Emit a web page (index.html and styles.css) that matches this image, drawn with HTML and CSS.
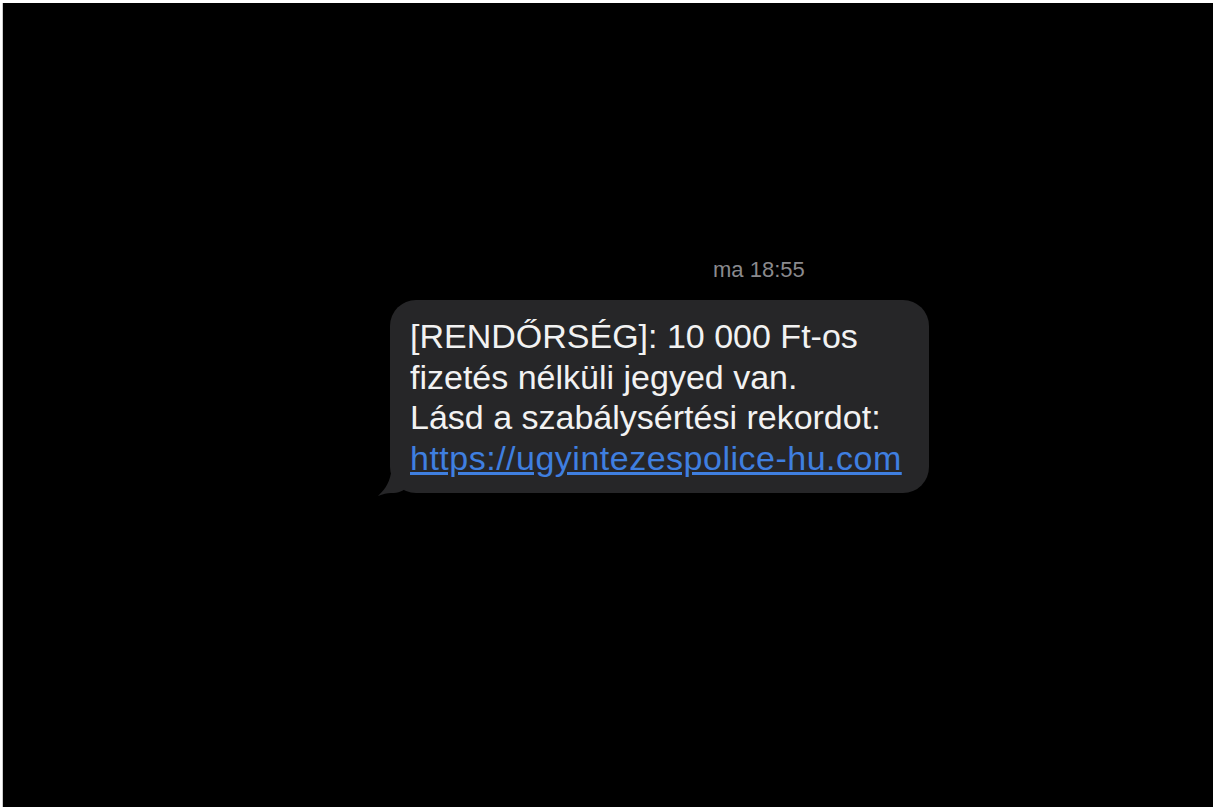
FILE: index.html
```html
<!DOCTYPE html>
<html lang="hu">
<head>
    <meta charset="UTF-8">
    <meta name="viewport" content="width=device-width,initial-scale=1">
    <title>Üzenet</title>
    <link rel="stylesheet" href="styles.css">
</head>
<body>
    <div class="screen">
        <div class="thread">
            <div class="time">ma 18:55</div>
            <div class="bubble">
                <p>[RENDŐRSÉG]: 10 000 Ft-os<br>fizetés nélküli jegyed van.<br>Lásd a szabálysértési rekordot:<br><a href="#">https://ugyintezespolice-hu.com</a></p>
                <svg class="tail" width="30" height="24" viewBox="0 0 30 24">
                    <path d="M14 0 L30 0 L30 14 C26 18 22 20 14 20 C10 20 6 21 1 23 C6 18 12 12 14 0 Z" fill="#262628"/>
                </svg>
            </div>
        </div>
    </div>
</body>
</html>
```

FILE: styles.css
```css
body {
    margin: 0;
    padding: 3px 7px 0 2px;
    background: #fff;
    font-family: "Liberation Sans", Arial, sans-serif;
    overflow: hidden;
}
.screen {
    background: #000;
    height: 810px;
    border-left: 1px solid #ccc;
    overflow: hidden;
}
.thread {
    padding: 254px 0 0 387px;
}
.time {
    color: #8a8a8e;
    font-size: 22px;
    margin: 0 0 17px 323px;
}
.bubble {
    position: relative;
    display: inline-block;
    background: #262628;
    border-radius: 26px;
    padding: 16px 27px 15px 20px;
}
.bubble p {
    margin: 0;
    color: #f2f2f2;
    font-size: 34px;
    line-height: 40.5px;
}
.bubble a {
    color: #3f7fe0;
    letter-spacing: 0.5px;
}
.tail {
    position: absolute;
    left: -13px;
    bottom: -4px;
}
```
